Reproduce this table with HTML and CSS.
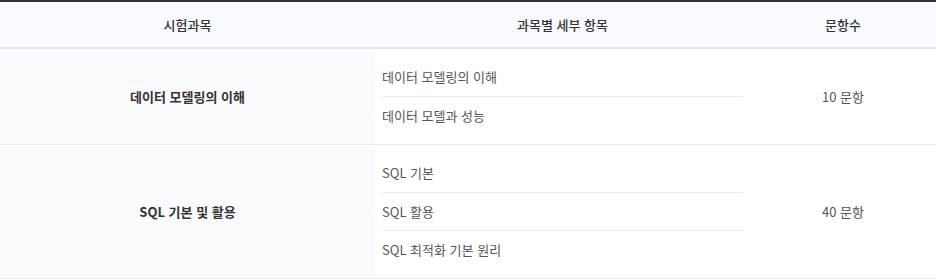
FILE: index.html
```html
<!DOCTYPE html>
<html lang="ko">
<head>
<meta charset="utf-8">
<link rel="stylesheet" href="styles.css">
</head>
<body>
<table class="exam">
  <colgroup>
    <col class="c1"><col class="c2"><col class="c3">
  </colgroup>
  <thead>
    <tr><th>시험과목</th><th>과목별 세부 항목</th><th>문항수</th></tr>
  </thead>
  <tbody>
    <tr>
      <td class="subject">데이터 모델링의 이해</td>
      <td class="details">
        <ul>
          <li>데이터 모델링의 이해</li>
          <li>데이터 모델과 성능</li>
        </ul>
      </td>
      <td class="count">10 문항</td>
    </tr>
    <tr>
      <td class="subject">SQL 기본 및 활용</td>
      <td class="details">
        <ul>
          <li>SQL 기본</li>
          <li>SQL 활용</li>
          <li>SQL 최적화 기본 원리</li>
        </ul>
      </td>
      <td class="count">40 문항</td>
    </tr>
  </tbody>
</table>
</body>
</html>
```
FILE: styles.css
```css
html, body {
  margin: 0;
  padding: 0;
  background: #ffffff;
}
body {
  font-family: "Noto Sans CJK KR", "Noto Sans", sans-serif;
  font-size: 13px;
  color: #444;
}
.exam {
  width: 936px;
  border-collapse: collapse;
  table-layout: fixed;
  border-top: 2px solid #333;
}
.c1 { width: 375px; }
.c2 { width: 375px; }
.c3 { width: 186px; }
.exam th {
  height: 45px;
  padding: 0;
  background: #f7faff;
  border-bottom: 2px solid #e3e6eb;
  font-weight: 500;
  color: #333;
  text-align: center;
  vertical-align: middle;
}
.exam td {
  padding: 0;
  vertical-align: middle;
  border-bottom: 1px solid #e8eaee;
}
.exam td.subject {
  background: #f9fbfe;
  text-align: center;
  font-weight: 700;
  color: #333;
}
.exam td.details {
  padding: 9px 7px 10px;
}
.exam td.count {
  text-align: center;
  color: #555;
}
.details ul {
  list-style: none;
  margin: 0;
  padding: 0;
}
.details li {
  height: 38px;
  line-height: 38px;
  color: #555;
  box-sizing: border-box;
}
.details li + li {
  border-top: 1px solid #e8eaee;
}
```
